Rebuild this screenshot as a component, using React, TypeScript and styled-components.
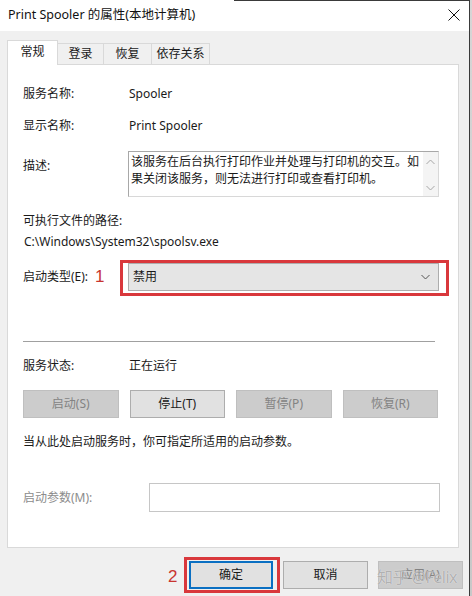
import React from "react";
import styled, { createGlobalStyle, css } from "styled-components";

const GlobalStyle = createGlobalStyle`
  html, body { margin: 0; padding: 0; background: #f0f0f0; }
  body {
    font-family: "Noto Sans", "Noto Sans CJK SC", sans-serif;
    font-size: 12px;
    color: #1a1a1a;
  }
  * { box-sizing: border-box; }
`;

const Screen = styled.div`
  display: flex;
  width: 472px;
  height: 596px;
  overflow: hidden;
`;

const Dialog = styled.div`
  width: 470px;
  height: 596px;
  display: flex;
  flex-direction: column;
  background: #f0f0f0;
  border-right: 1px solid #3a3a3a;
`;

const Backdrop = styled.div`
  width: 2px;
  height: 596px;
  background: linear-gradient(#d6d6d6, #c8c8c8);
`;

const TitleBar = styled.div`
  height: 31px;
  flex: none;
  display: flex;
  align-items: center;
  justify-content: space-between;
  padding: 0 9px 0 8px;
  background: linear-gradient(to right, #ffffff 0, #ffffff 50%, #3a3a3a 50%) top / 100% 1px no-repeat, #ffffff;
`;

const Title = styled.span`
  font-size: 12.5px;
  line-height: 18px;
  color: #111;
  margin-top: -2px;
`;

const CloseButton = styled.span`
  display: flex;
  width: 12px;
  height: 12px;
  margin-top: -1px;
`;

const Body = styled.div`
  flex: 1;
  display: flex;
  flex-direction: column;
  padding: 9px 0 0 7px;
`;

const TabStrip = styled.div`
  display: flex;
  align-items: flex-end;
  height: 24px;
`;

const Tab = styled.div<{ $w: number; $active?: boolean }>`
  width: ${(p) => p.$w}px;
  display: flex;
  align-items: center;
  justify-content: center;
  border: 1px solid #d9d9d9;
  border-bottom: none;
  line-height: 18px;
  ${(p) =>
    p.$active
      ? css`
          height: 25px;
          margin-bottom: -1px;
          background: #ffffff;
          position: relative;
          z-index: 1;
          padding-bottom: 2px;
        `
      : css`
          height: 21px;
          margin-left: -1px;
          background: #f0f0f0;
        `}
`;

const Panel = styled.div`
  width: 452px;
  height: 484px;
  background: #ffffff;
  border: 1px solid #d9d9d9;
  padding: 0 18px 0 15px;
  display: flex;
  flex-direction: column;
`;

const InfoRow = styled.div<{ $mt: number; $top?: boolean }>`
  display: flex;
  align-items: ${(p) => (p.$top ? "flex-start" : "center")};
  margin-top: ${(p) => p.$mt}px;
  min-height: 18px;
  line-height: 18px;
  position: relative;
`;

const Label = styled.span<{ $w?: number; $muted?: boolean; $pt?: number }>`
  width: ${(p) => p.$w ?? 105}px;
  flex: none;
  color: ${(p) => (p.$muted ? "#8c8c8c" : "#1a1a1a")};
  padding-top: ${(p) => p.$pt ?? 0}px;
`;

const Value = styled.span`
  padding-left: 1px;
`;

const PlainLine = styled.div<{ $mt: number; $indent?: number }>`
  margin-top: ${(p) => p.$mt}px;
  line-height: 18px;
  padding-left: ${(p) => p.$indent ?? 0}px;
`;

const DescBox = styled.div`
  width: 311px;
  height: 46px;
  display: flex;
  border: 1px solid #a8a8a8;
  border-right-color: #d8d8d8;
  border-bottom-color: #d8d8d8;
`;

const DescText = styled.div`
  flex: 1;
  padding: 1px 2px 0 2px;
  line-height: 17px;
  letter-spacing: 0;
`;

const ScrollBar = styled.div`
  width: 15px;
  flex: none;
  background: #f4f4f4;
  display: flex;
  flex-direction: column;
  justify-content: space-between;
  align-items: center;
  padding: 7px 0 5px;
`;

const Combo = styled.div`
  width: 311px;
  height: 28px;
  display: flex;
  align-items: center;
  justify-content: space-between;
  padding: 0 8px 0 4px;
  background: #e5e5e5;
  border: 1px solid #adadad;
  position: relative;
`;

const Highlight = styled.span<{ $l: number; $t: number; $r: number; $b: number }>`
  position: absolute;
  left: ${(p) => p.$l}px;
  top: ${(p) => p.$t}px;
  right: ${(p) => p.$r}px;
  bottom: ${(p) => p.$b}px;
  border: 3px solid #d9383c;
  pointer-events: none;
`;

const Marker = styled.span<{ $l: number; $t: number }>`
  position: absolute;
  left: ${(p) => p.$l}px;
  top: ${(p) => p.$t}px;
  color: #c8342f;
  font-family: "Liberation Sans", sans-serif;
  font-size: 17px;
  line-height: 18px;
`;

const Separator = styled.div`
  margin-top: 50px;
  width: 412px;
  height: 1px;
  background: #a0a0a0;
`;

const ButtonGrid = styled.div`
  margin-top: 15px;
  width: 415px;
  display: grid;
  grid-template-columns: repeat(4, 1fr);
  column-gap: 11px;
`;

const WinButton = styled.div<{ $disabled?: boolean; $default?: boolean; $w?: number }>`
  height: 28px;
  ${(p) => p.$w !== undefined && css`width: ${p.$w}px;`}
  display: flex;
  align-items: center;
  justify-content: center;
  line-height: 18px;
  background: ${(p) => (p.$disabled ? "#cccccc" : "#e1e1e1")};
  border: ${(p) =>
    p.$default ? "2px solid #0a6fc2" : p.$disabled ? "1px solid #bfbfbf" : "1px solid #adadad"};
  color: ${(p) => (p.$disabled ? "#838383" : "#1a1a1a")};
  position: relative;
`;

const ParamInput = styled.div`
  width: 291px;
  height: 29px;
  border: 1px solid #c6c6c6;
  background: #ffffff;
`;

const Footer = styled.div`
  display: flex;
  justify-content: flex-end;
  gap: 10px;
  padding: 13px 6px 0 0;
  position: relative;
`;

const Watermark = styled.span`
  position: absolute;
  right: 12px;
  top: 19px;
  font-size: 16px;
  line-height: 20px;
  color: rgba(165, 165, 165, 0.85);
  text-shadow: 0 0 1px rgba(255, 255, 255, 0.9);
  pointer-events: none;
  letter-spacing: -0.5px;
`;

const Chevron = ({ up }: { up?: boolean }) => (
  <svg width="9" height="6" viewBox="0 0 9 6">
    <polyline
      points={up ? "0.5,5 4.5,1 8.5,5" : "0.5,1 4.5,5 8.5,1"}
      fill="none"
      stroke="#a6a6a6"
      strokeWidth="1"
    />
  </svg>
);

export default function App() {
  return (
    <>
      <GlobalStyle />
      <Screen>
        <Dialog>
          <TitleBar>
            <Title>Print Spooler 的属性(本地计算机)</Title>
            <CloseButton>
              <svg width="12" height="12" viewBox="0 0 12 12">
                <path d="M0.5 0.5 L11.5 11.5 M11.5 0.5 L0.5 11.5" stroke="#111" strokeWidth="1" fill="none" />
              </svg>
            </CloseButton>
          </TitleBar>
          <Body>
            <TabStrip>
              <Tab $w={51} $active>常规</Tab>
              <Tab $w={47}>登录</Tab>
              <Tab $w={49}>恢复</Tab>
              <Tab $w={59}>依存关系</Tab>
            </TabStrip>
            <Panel>
              <InfoRow $mt={20}>
                <Label>服务名称:</Label>
                <Value>Spooler</Value>
              </InfoRow>
              <InfoRow $mt={14}>
                <Label>显示名称:</Label>
                <Value>Print Spooler</Value>
              </InfoRow>
              <InfoRow $mt={16} $top>
                <Label $pt={6}>描述:</Label>
                <DescBox>
                  <DescText>
                    该服务在后台执行打印作业并处理与打印机的交互。如果关闭该服务，则无法进行打印或查看打印机。
                  </DescText>
                  <ScrollBar>
                    <Chevron up />
                    <Chevron />
                  </ScrollBar>
                </DescBox>
              </InfoRow>
              <PlainLine $mt={15}>可执行文件的路径:</PlainLine>
              <PlainLine $mt={3} $indent={1}>C:\Windows\System32\spoolsv.exe</PlainLine>
              <InfoRow $mt={12}>
                <Label>启动类型(E):</Label>
                <Marker $l={72} $t={5}>1</Marker>
                <Combo>
                  <span>禁用</span>
                  <svg width="9" height="6" viewBox="0 0 9 6">
                    <polyline points="0.5,1 4.5,5 8.5,1" fill="none" stroke="#555" strokeWidth="1" />
                  </svg>
                  <Highlight $l={-9} $t={-4} $r={-11} $b={-6} />
                </Combo>
              </InfoRow>
              <Separator />
              <InfoRow $mt={15}>
                <Label>服务状态:</Label>
                <Value>正在运行</Value>
              </InfoRow>
              <ButtonGrid>
                <WinButton $disabled>启动(S)</WinButton>
                <WinButton>停止(T)</WinButton>
                <WinButton $disabled>暂停(P)</WinButton>
                <WinButton $disabled>恢复(R)</WinButton>
              </ButtonGrid>
              <PlainLine $mt={15}>当从此处启动服务时，你可指定所适用的启动参数。</PlainLine>
              <InfoRow $mt={32}>
                <Label $w={126} $muted>启动参数(M):</Label>
                <ParamInput />
              </InfoRow>
            </Panel>
            <Footer>
              <WinButton $w={84} $default>
                <Marker $l={-23} $t={5}>2</Marker>
                确定
                <Highlight $l={-7} $t={-6} $r={-9} $b={-6} />
              </WinButton>
              <WinButton $w={85}>取消</WinButton>
              <WinButton $w={85} $disabled>应用(A)</WinButton>
              <Watermark>知乎 @Felix</Watermark>
            </Footer>
          </Body>
        </Dialog>
        <Backdrop />
      </Screen>
    </>
  );
}
